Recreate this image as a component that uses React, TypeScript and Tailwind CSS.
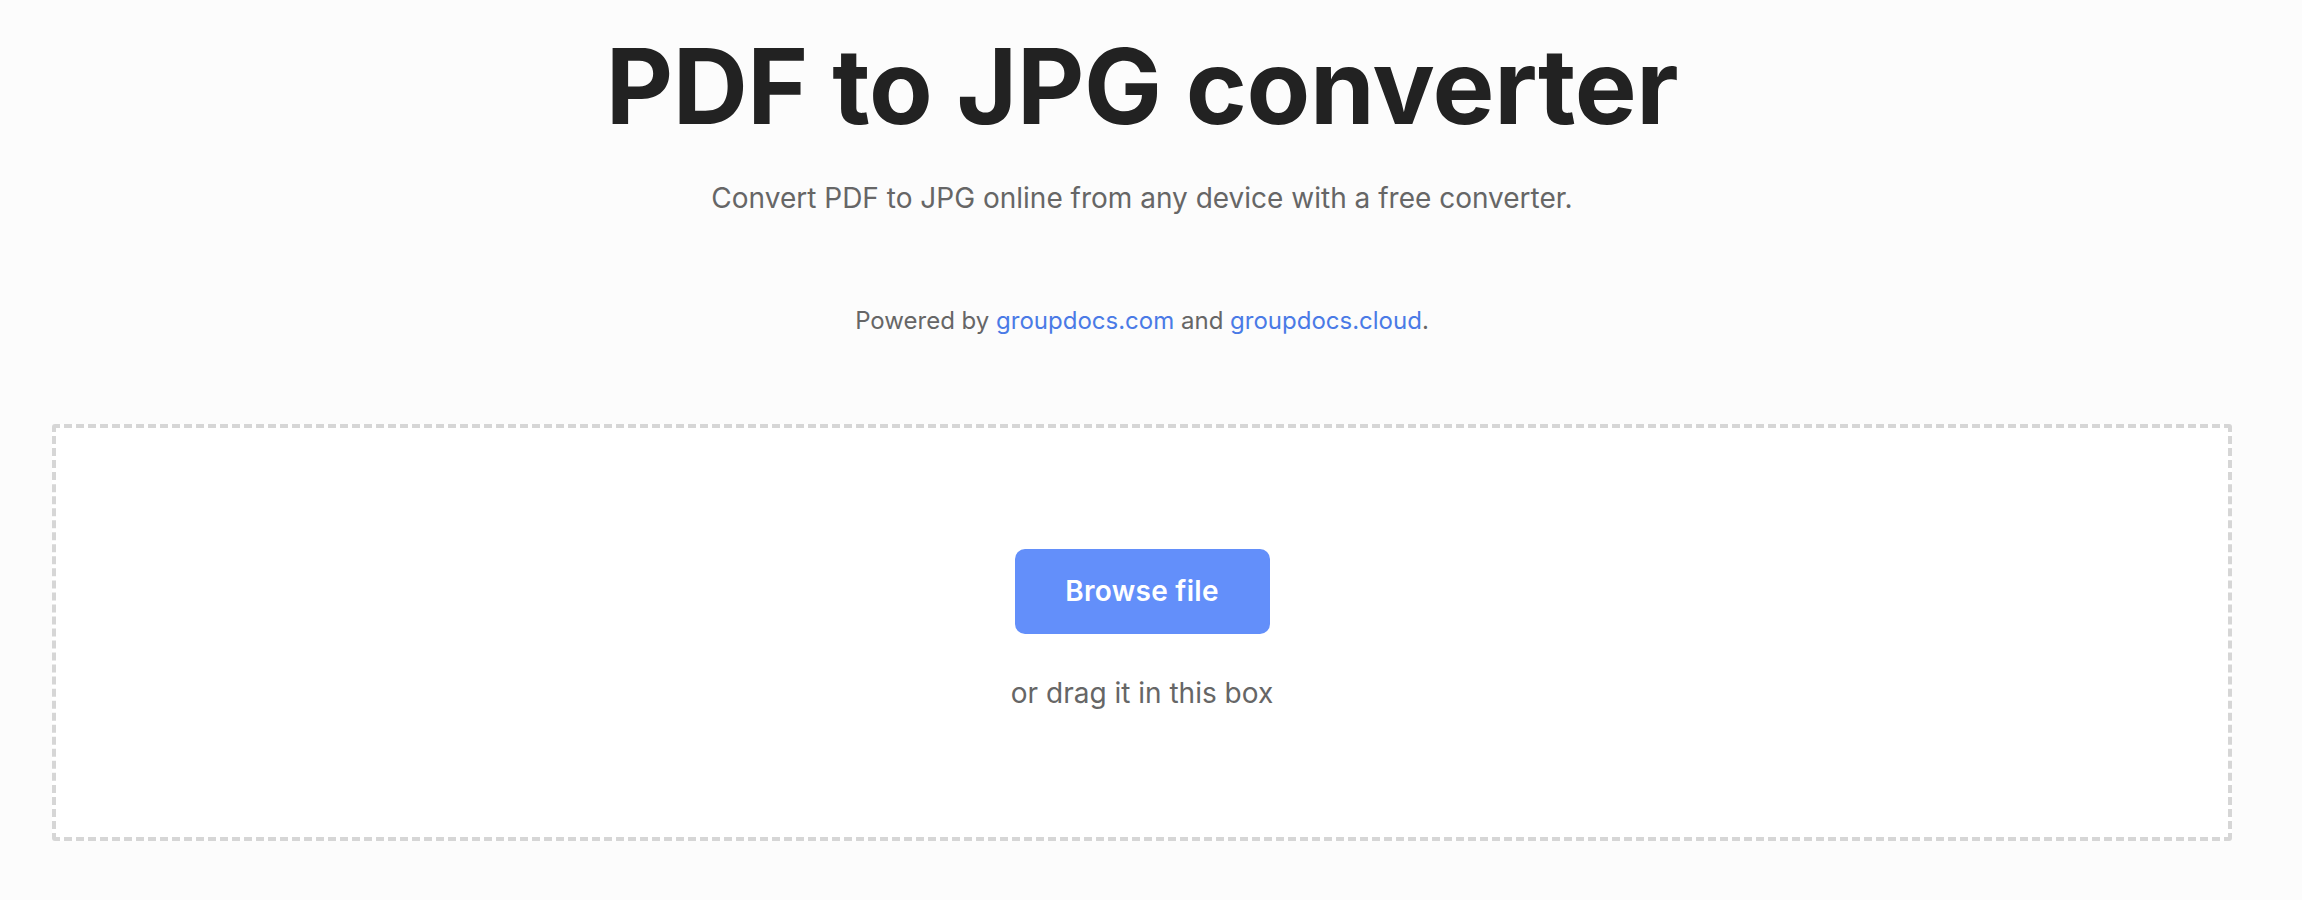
import React from "react";

export default function App() {
  return (
    <div className="min-h-[900px] w-full bg-[#fcfcfc]" style={{ fontFamily: "Inter, 'Noto Sans', sans-serif" }}>
      <div className="w-[2284px] flex flex-col items-center">
        <h1 className="mt-[24px] text-[104px] leading-[1.2] font-bold text-[#222222] tracking-[-0.4px]">
          PDF to JPG converter
        </h1>
        <p className="mt-[28px] text-[28px] leading-[1.5] text-[#666666]">
          Convert PDF to JPG online from any device with a free converter.
        </p>
        <p className="mt-[84px] text-[24px] leading-[1.5] text-[#666666]">
          Powered by <a className="text-[#4a7ae6]">groupdocs.com</a> and{" "}
          <a className="text-[#4a7ae6]">groupdocs.cloud</a>.
        </p>
        <div className="mt-[85px] w-[2180px] self-center bg-white border-4 border-dashed border-[#d6d6d6] rounded-[3px] flex flex-col items-center pt-[121px] pb-[123px]">
          <button className="w-[255px] h-[85px] rounded-[10px] bg-[#638ffa] text-white text-[28px] font-semibold tracking-[0.3px] flex items-center justify-center">
            Browse file
          </button>
          <p className="mt-[38px] text-[28px] leading-[1.5] text-[#666666]">or drag it in this box</p>
        </div>
      </div>
    </div>
  );
}
